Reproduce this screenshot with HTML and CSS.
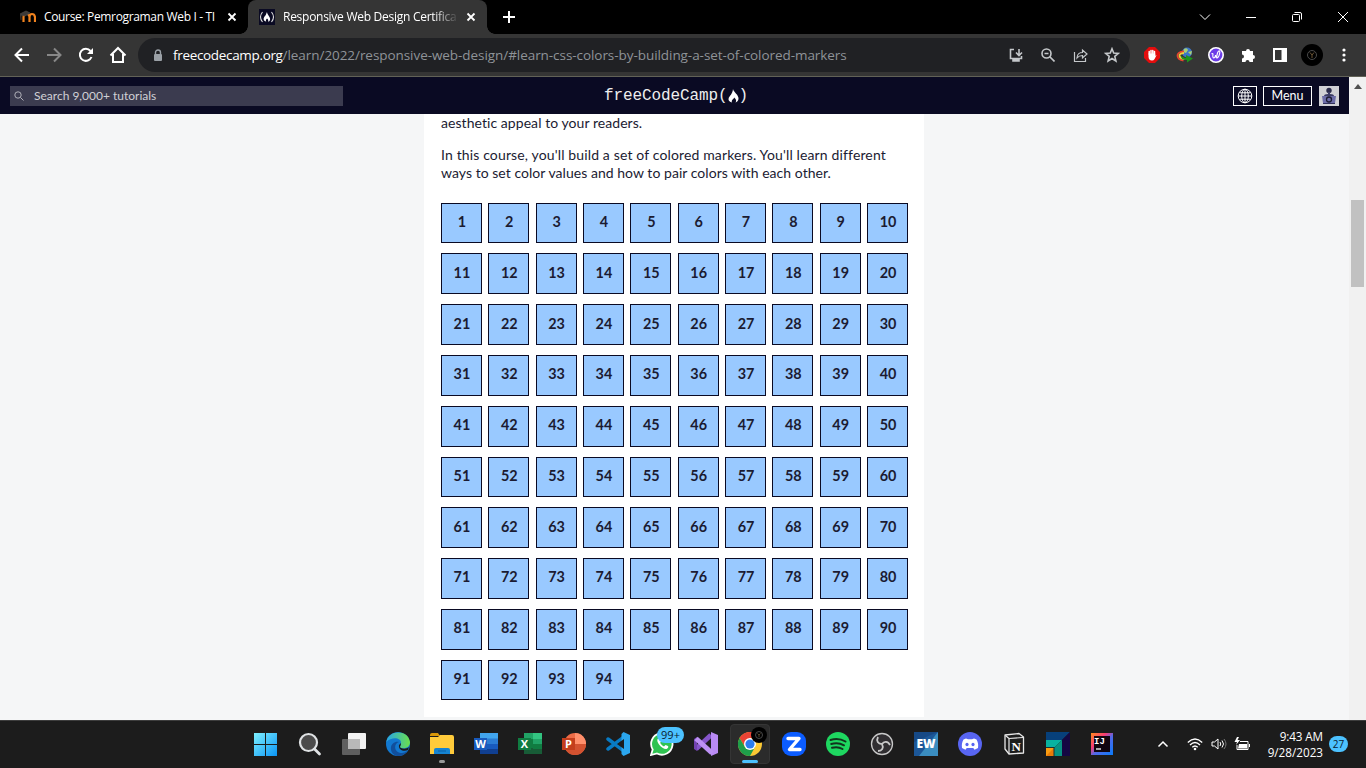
FILE: index.html
```html
<!DOCTYPE html>
<html lang="en">
<head>
<meta charset="utf-8">
<title>Responsive Web Design Certification</title>
<link rel="stylesheet" href="styles.css">
</head>
<body>
<div class="tabs">
  <div class="tab">
    <svg class="fav" width="16" height="16" viewBox="0 0 16 16"><path d="M3.500 13V8q0-3 3-3t3 3v5M9.500 8q0-3 2.500-3t3 3v5" fill="none" stroke="#f0821e" stroke-width="2.200"/><path d="M0 5l6-3 4 2-5 3-4-1v5" fill="#3d3a38" stroke="#4a4643" stroke-width=".8"/></svg>
    <span class="title t1">Course: Pemrograman Web I - TI</span>
    <svg class="x" width="10" height="10" viewBox="0 0 10 10"><path d="M1.500 1.500l7 7M8.500 1.500l-7 7"/></svg>
  </div>
  <div class="tab active">
    <svg class="fav" width="16" height="16" viewBox="0 0 16 16"><path fill="#0a0a23" d="M0 0h16v16H0z"/><path d="M3.500 3Q-.5 8 3.500 13M12.500 3q4 5 0 10" fill="none" stroke="#ddd" stroke-width="1.100"/><path d="M8 3c0 3 4 5 3 8-.5 1-1 1.500-2 1.500.8-2-.3-2-1-3-1 1-1.500 2-.7 3C4 12 4 9 6 7c1-1 1-2 2-4z" fill="#fff"/></svg>
    <span class="title t2">Responsive Web Design Certifica</span>
    <svg class="x" width="10" height="10" viewBox="0 0 10 10"><path d="M1.500 1.500l7 7M8.500 1.500l-7 7"/></svg>
  </div>
  <svg class="plus" width="12" height="12" viewBox="0 0 12 12"><path d="M6 0v12M0 6h12" stroke="#fff" stroke-width="2"/></svg>
  <div class="win">
    <svg viewBox="0 0 12 12"><path d="M1 3.500l5 5 5-5"/></svg>
    <svg viewBox="0 0 12 12"><path d="M1 6.500h10"/></svg>
    <svg viewBox="0 0 12 12"><rect x="1.500" y="3.500" width="7" height="7" rx="1"/><path d="M3.500 1.500h5.500q1.500 0 1.500 1.500v5.500"/></svg>
    <svg viewBox="0 0 12 12"><path d="M1 1l10 10M11 1L1 11"/></svg>
  </div>
</div>
<div class="toolbar">
  <div class="slot"><svg width="16" height="16" viewBox="0 0 16 16" class="ln"><path d="M15 8H2M8 1.500L1.500 8 8 14.500"/></svg></div>
  <div class="slot"><svg width="16" height="16" viewBox="0 0 16 16" class="ln dim"><path d="M1 8h13M8 1.500L14.500 8 8 14.500"/></svg></div>
  <div class="slot"><svg width="16" height="16" viewBox="0 0 16 16" class="ln"><path d="M13.500 10A6 6 0 1 1 12.500 4"/><path d="M15 1v6H9z" fill="#fff" stroke="none"/></svg></div>
  <div class="slot"><svg width="18" height="18" viewBox="0 0 18 18" class="ln"><path d="M1.500 9.500L9 2l7.500 7.500M4 8v8h10V8"/></svg></div>
  <div class="omni">
    <div class="slot lock"><svg width="10" height="13" viewBox="0 0 10 13"><path d="M2.500 5V3.500a2.500 2.500 0 0 1 5 0V5" fill="none" stroke="#9aa0a6" stroke-width="1.400"/><rect x="1" y="5" width="8" height="7" rx="1" fill="#9aa0a6"/></svg></div>
    <div class="url"><b>freecodecamp.org</b>/learn/2022/responsive-web-design/#learn-css-colors-by-building-a-set-of-colored-markers</div>
    <div class="slot"><svg width="14" height="14" viewBox="0 0 14 14" class="gr"><path d="M5 1.500H1.500v9h11V8M10 1v6M7 4.500l3 3 3-3"/><path d="M4 11h6v2H4z" fill="#c4c7ca"/></svg></div>
    <div class="slot"><svg width="14" height="14" viewBox="0 0 14 14" class="gr"><circle cx="5.500" cy="5.500" r="4.500"/><path d="M8.500 8.500l5 5M3.500 5.500h4"/></svg></div>
    <div class="slot"><svg width="15" height="15" viewBox="0 0 15 15" class="gr thin"><path d="M1.500 4v9.500h11V10M4 10c0-4 3-5.500 5.500-5.500V2L14 6l-4.500 4V7.500C7 7.500 5.500 8 4 10z"/></svg></div>
    <div class="slot"><svg width="16" height="16" viewBox="0 0 16 16" class="gr"><path d="M8 1.800l1.700 4.300 4.600.3-3.500 3 1.100 4.600L8 11.500 4.100 14l1.100-4.600-3.500-3 4.600-.3z"/></svg></div>
  </div>
  <div class="slot"><svg width="16" height="16" viewBox="0 0 16 16"><path d="M5 0h6l5 5v6l-5 5H5l-5-5V5z" fill="#e40d0d"/><path d="M5.200 7V4.500M7 7V3.500M8.800 7V3.500M10.500 8V4.500" stroke="#fff" stroke-width="1.500" stroke-linecap="round"/><path d="M4.500 6.500h6.700v2.300l1.400-.8-2 4q-1 1.500-2.600 1.500Q4.500 13.500 4.500 9.500z" fill="#fff"/></svg></div>
  <div class="slot"><svg width="17" height="16" viewBox="0 0 17 16"><circle cx="11" cy="5.500" r="5" fill="#3b75c8"/><path d="M8 2q3-2 4 1l-2 3-3-1zM12 5l4-1-1 4z" fill="#a9cf74"/><path d="M8 4.500Q1 5 1.500 9t6 4.500" fill="none" stroke="#e8452e" stroke-width="1.800"/><path d="M8 6Q3 6.500 3.500 9t5 3" fill="none" stroke="#ead23c" stroke-width="1.800"/><path d="M7 8q-2 1 0 2.500l3 .5V8l7 3.500-6 4V13q-6 0-6-3.500" fill="#1c941c"/></svg></div>
  <div class="slot"><svg width="16" height="16" viewBox="0 0 16 16"><circle cx="8" cy="8" r="7.200" fill="#6c3de8" stroke="#fff" stroke-width="1.600"/><path d="M3.500 7q1-1 1.500 0c-1 5 2 5 2.500 1 0 4 3 4 4-1 1-4-1-4-2-1l-1 4" fill="none" stroke="#fff" stroke-width="1.100"/></svg></div>
  <div class="slot"><svg width="15" height="15" viewBox="0 0 15 15"><path fill="#fff" d="M1 3h4a2 2 0 1 1 4 0h3v4a2 2 0 1 1 0 4v3H8.500a2 2 0 1 0-4 0H1v-3.500a2 2 0 1 0 0-4z"/></svg></div>
  <div class="slot"><svg width="14" height="14" viewBox="0 0 14 14"><path d="M1 1h12v12H1z" fill="none" stroke="#fff" stroke-width="2"/><path fill="#fff" d="M8.500 1H13v12H8.500z"/></svg></div>
  <div class="slot"><svg width="22" height="22" viewBox="0 0 22 22"><circle cx="11" cy="11" r="11" fill="#000"/><circle cx="11" cy="11" r="4.500" fill="none" stroke="#4a4a4a"/><path d="M9 8.500l2 2.500 2-2.500M11 11v3" stroke="#6b5535" fill="none"/></svg></div>
  <div class="slot"><svg width="4" height="14" viewBox="0 0 4 14" fill="#fff"><circle cx="2" cy="2" r="1.600"/><circle cx="2" cy="7" r="1.600"/><circle cx="2" cy="12" r="1.600"/></svg></div>
</div>
<div class="view">
  <div class="site">
    <header class="head">
      <div class="search"><svg width="10" height="10" viewBox="0 0 10 10"><circle cx="4" cy="4" r="3.200"/><path d="M6.500 6.500l3 3"/></svg><span>Search 9,000+ tutorials</span></div>
      <div class="brand"><span>freeCodeCamp(</span><svg width="11" height="14" viewBox="0 0 11 14"><path d="M5 0c.5 3 6 6 5.500 10-.3 2-1.500 3-3 3.500 1.300-2 .5-3-1.300-5C5.500 10.500 3 11 4 13.500 1 13 0 11 .7 9 1.500 7 4.500 5 5 0z" fill="#fff"/></svg><span>)</span></div>
      <div class="nav">
        <div class="btn globe"><svg width="16" height="16" viewBox="0 0 16 16"><circle cx="8" cy="8" r="6.800"/><ellipse cx="8" cy="8" rx="3.300" ry="6.800"/><path d="M8 1.500v13M1.500 8h13M2.500 4.800h11M2.500 11.200h11"/></svg></div>
        <div class="btn menu">Menu</div>
        <svg class="avatar" width="20" height="20" viewBox="0 0 20 20"><path fill="#d0d0d5" d="M0 0h20v20H0z"/><circle cx="10" cy="4.500" r="2.700" fill="#2a2a4a"/><path d="M5 10q0-2 4-2V6h2v2q4 0 4 2z" fill="#3b3b65"/><path d="M3 10h14l-1 7H4z" fill="#6c6ca8"/><circle cx="10" cy="13.500" r="2.500" fill="none" stroke="#1b1b32" stroke-width="1.300"/><path d="M4 17.500h12" stroke="#33335c"/></svg>
      </div>
    </header>
    <main class="page">
      <section class="card">
        <p class="p1">aesthetic appeal to your readers.</p>
        <p class="p2"><span class="l1">In this course, you'll build a set of colored markers. You'll learn different</span><br><span class="l2">ways to set color values and how to pair colors with each other.</span></p>
        <div class="grid">
<a>1</a><a>2</a><a>3</a><a>4</a><a>5</a><a>6</a><a>7</a><a>8</a><a>9</a><a>10</a>
<a>11</a><a>12</a><a>13</a><a>14</a><a>15</a><a>16</a><a>17</a><a>18</a><a>19</a><a>20</a>
<a>21</a><a>22</a><a>23</a><a>24</a><a>25</a><a>26</a><a>27</a><a>28</a><a>29</a><a>30</a>
<a>31</a><a>32</a><a>33</a><a>34</a><a>35</a><a>36</a><a>37</a><a>38</a><a>39</a><a>40</a>
<a>41</a><a>42</a><a>43</a><a>44</a><a>45</a><a>46</a><a>47</a><a>48</a><a>49</a><a>50</a>
<a>51</a><a>52</a><a>53</a><a>54</a><a>55</a><a>56</a><a>57</a><a>58</a><a>59</a><a>60</a>
<a>61</a><a>62</a><a>63</a><a>64</a><a>65</a><a>66</a><a>67</a><a>68</a><a>69</a><a>70</a>
<a>71</a><a>72</a><a>73</a><a>74</a><a>75</a><a>76</a><a>77</a><a>78</a><a>79</a><a>80</a>
<a>81</a><a>82</a><a>83</a><a>84</a><a>85</a><a>86</a><a>87</a><a>88</a><a>89</a><a>90</a>
<a>91</a><a>92</a><a>93</a><a>94</a>
        </div>
      </section>
    </main>
  </div>
  <div class="scroll"><svg width="8" height="5" viewBox="0 0 8 5"><path d="M0 5l4-5 4 5z" fill="#505050"/></svg><div class="thumb"></div></div>
</div>
<footer class="task">
  <div class="apps">
    <div class="app"><svg viewBox="0 0 24 24"><defs><linearGradient id="w" x1="0" y1="0" x2="1" y2="1"><stop offset="0" stop-color="#7df0ff"/><stop offset="1" stop-color="#0a94f5"/></linearGradient></defs><rect width="23" height="23" x="0" y="1" fill="url(#w)"/><path d="M11.500 0v24M0 12.500h24" stroke="#1c1c1c"/></svg></div>
    <div class="app"><svg viewBox="0 0 24 24"><circle cx="10.500" cy="10.500" r="8.500" fill="#4b4b4b" stroke="#dfe2e4" stroke-width="2.200"/><path d="M16.500 17l5 5" stroke="#dfe2e4" stroke-width="2.800" stroke-linecap="round"/></svg></div>
    <div class="app"><svg viewBox="0 0 24 24"><rect x="6" y="1" width="18" height="16" rx="1" fill="#f2f2f2"/><rect x="0" y="7" width="18" height="16" rx="1" fill="#5f5f5f"/><path d="M6 7h12v10H6z" fill="#b9b9b9"/></svg></div>
    <div class="app"><svg viewBox="0 0 24 24"><defs><linearGradient id="e"><stop offset="0" stop-color="#27a5e8"/><stop offset="1" stop-color="#6be04b"/></linearGradient></defs><circle cx="12" cy="12" r="12" fill="#1278d0"/><path d="M.3 10C2-2 22-3 24 10c0 5-4 7-9 6-3-1 0-2 0-5 0-6-10-6-14.700-1z" fill="url(#e)"/><path d="M13 10c-6 2-5 11 3 11 4 0 6-3 6-3-4 8-15 8-17 0-1-6 4-9 8-8z" fill="#114f9c"/><path d="M15 11c0 3-2 4 0 5s6 1 8-1l-1 3c-4 2-10 0-9-5z" fill="#1c1c1c"/></svg></div>
    <div class="app run"><svg viewBox="0 0 24 24"><path d="M0 3q0-2 2-2h6l2 3H0z" fill="#d99708"/><path d="M0 5h8l2-2h12q2 0 2 2v17H0z" fill="#ffcb3b"/><path d="M4 22v-4q0-2 2-2h12q2 0 2 2v4z" fill="#1584d2"/><path d="M8 19h8" stroke="#0a5fa5"/></svg></div>
    <div class="app"><svg viewBox="0 0 24 24"><path fill="#41a5ee" d="M6 1h18v6H6z"/><path fill="#2b7cd3" d="M6 6.500h18V12H6z"/><path fill="#185abd" d="M6 12h18v5.500H6z"/><path fill="#103f91" d="M6 17h18v5H6z"/><path fill="#185abd" d="M0 6h13v12H0z"/><text x="6.500" y="16" class="ol">W</text></svg></div>
    <div class="app"><svg viewBox="0 0 24 24"><path fill="#21a366" d="M6 1h18v11H6z"/><path fill="#33c481" d="M15 1h9v6h-9z"/><path fill="#107c41" d="M6 7h9v10H6z"/><path fill="#185c37" d="M6 16h18v6H6z"/><path fill="#107c41" d="M15 12h9v5h-9zM0 6h13v12H0z"/><text x="6.500" y="16" class="ol">X</text></svg></div>
    <div class="app"><svg viewBox="0 0 24 24"><circle cx="13" cy="12" r="11" fill="#ed6c47"/><path d="M13 1a11 11 0 0 1 11 11H13z" fill="#ff8f6b"/><path d="M2 12h22a11 11 0 0 1-22 0z" fill="#d35230"/><path fill="#c43e1c" d="M0 6h13v12H0z"/><text x="6.500" y="16" class="ol">P</text></svg></div>
    <div class="app"><svg viewBox="0 0 24 24"><path d="M18 5L2 17M18 19L2 7" stroke="#087bc4" stroke-width="3.500" stroke-linecap="round"/><path d="M17.500 0L24 3v18l-6.500 3-2-2V2z" fill="#2ba6ee"/><path d="M18 7v10l-7-5z" fill="#1c1c1c"/></svg></div>
    <div class="app wa"><svg viewBox="0 0 24 24"><path d="M1 23l1.700-5.500A10.700 10.700 0 1 1 7 21.500z" fill="#2fc351" stroke="#fff" stroke-width="1.800"/><path d="M8 6.500c-3 3 4 11 8.500 10.500 2-.7 2-2.500 1.500-3l-2.500-1-1.500 1.500c-2-1-3-2-3.800-3.700L11.300 9l-1.200-2.500z" fill="#fff"/></svg><span class="badge">99+</span></div>
    <div class="app"><svg viewBox="0 0 24 24"><path d="M2 17L17 3" stroke="#8655ca" stroke-width="5"/><path d="M0 7l3-2v14l-3-2z" fill="#7242b0"/><path d="M17 0l7 3v18l-7 3z" fill="#b98af4"/><path d="M2 6.500L18 21" stroke="#bd91f4" stroke-width="5"/></svg></div>
    <div class="app chrome"><svg viewBox="0 0 24 24"><circle cx="12" cy="12" r="12" fill="#fcc934"/><path d="M1.600 6A12 12 0 0 1 22.400 6H12L7 15z" fill="#ea4335"/><path d="M1.600 6A12 12 0 0 0 12 24l5-9H7z" fill="#1e9e4a"/><circle cx="12" cy="12" r="6" fill="#fff"/><circle cx="12" cy="12" r="4.600" fill="#2a7df0"/></svg><svg class="mini" viewBox="0 0 16 16"><circle cx="8" cy="8" r="8" fill="#000"/><circle cx="8" cy="8" r="3.500" fill="none" stroke="#4a4a4a"/><path d="M6.500 6.500L8 8l1.500-1.500M8 8v2" fill="none" stroke="#55462c"/></svg></div>
    <div class="app"><svg viewBox="0 0 24 24"><rect width="24" height="24" rx="9" fill="#0b5cff"/><path d="M6 6.500h11L7.500 17.500H18" fill="none" stroke="#fff" stroke-width="3.400" stroke-linejoin="round" stroke-linecap="round"/></svg></div>
    <div class="app"><svg viewBox="0 0 24 24"><circle cx="12" cy="12" r="12" fill="#1ed760"/><path d="M4.500 8q8-2.500 15 1.500M5.200 12q7-2 12.800 1.300M6 15.800q6-1.500 10.500 1.200" fill="none" stroke="#12331d" stroke-width="2" stroke-linecap="round"/></svg></div>
    <div class="app"><svg viewBox="0 0 24 24"><circle cx="12" cy="12" r="10.500" fill="#302e31" stroke="#c8c8c8" stroke-width="1.300"/><path d="M12 12c-4 0-6-3-4-7M12 12c2-3 6-3 8 1M12 12c2 4 0 7-4 7" fill="none" stroke="#c8c8c8" stroke-width="1.800"/></svg></div>
    <div class="app"><svg viewBox="0 0 24 24"><path fill="#1c5798" d="M0 0h24v24H0z"/><path d="M24 0v24H5z" fill="#4cabd5" opacity=".65"/><path d="M0 0h24L0 10z" fill="#123f7a" opacity=".6"/><text x="12" y="16" class="ew">EW</text></svg></div>
    <div class="app"><svg viewBox="0 0 24 24"><circle cx="12" cy="12" r="12" fill="#5865f2"/><path d="M8 6.500l2 .8h4l2-.8 2.500 1c1.500 2.500 2 5 1.500 8.500l-3.500 1.700-1.200-1.700H8.700l-1.200 1.700L4 16c-.5-3.500 0-6 1.500-8.500z" fill="#fff"/><ellipse cx="9" cy="12.500" rx="1.600" ry="1.800" fill="#5865f2"/><ellipse cx="15" cy="12.500" rx="1.600" ry="1.800" fill="#5865f2"/></svg></div>
    <div class="app"><svg viewBox="0 0 24 24"><path d="M3 3l14-1.500L21.500 5v16L7 22l-4-5z" fill="#1c1c1c" stroke="#e8e8e8" stroke-width="1.300" stroke-linejoin="round"/><path d="M7 6.500L21 5.500M7 6.500V22M3.500 3.500L7 6.500" stroke="#e8e8e8" stroke-width="1.200"/><text x="14.200" y="18.500" class="no">N</text></svg></div>
    <div class="app"><svg viewBox="0 0 24 24"><path fill="#07407a" d="M0 0h24L16 8H0z"/><path fill="#150842" d="M24 0v24h-8V8z"/><path fill="#08b3a0" d="M0 8h16l-7 7H0z"/><path fill="#079382" d="M16 8v16H8v-8z"/><path fill="#fb9d11" d="M0 16h8v8H0z"/><path d="M0 24l8-8v8z" fill="#e87b08"/><path d="M0 15.500h8V24" fill="none" stroke="#1c3033"/></svg></div>
    <div class="app"><svg viewBox="0 0 24 24"><defs><linearGradient id="j" x1="0" y1="0" x2="1" y2="1"><stop offset="0" stop-color="#ff8a1d"/><stop offset=".35" stop-color="#f73a74"/><stop offset=".55" stop-color="#5268e8"/><stop offset="1" stop-color="#087cfa"/></linearGradient></defs><rect x="1" y="1" width="22" height="22" fill="url(#j)"/><path d="M4 4h16v16H4z" fill="#100510"/><text x="9.500" y="12" class="ij">IJ</text><path d="M6 17h5" stroke="#fff" stroke-width="1.300"/></svg></div>
  </div>
  <div class="tray">
    <svg width="12" height="8" viewBox="0 0 12 8"><path d="M1.500 6.500L6 2l4.500 4.500" stroke-width="1.500"/></svg>
    <svg class="wifi" width="16" height="14" viewBox="0 0 16 14"><path d="M.8 5.500q7.200-7 14.400 0M3 8q5-5 10 0M5.300 10.300q2.700-2.700 5.400 0" stroke-width="1.300"/><circle cx="8" cy="12" r="1.300" fill="#fff" stroke="none"/></svg>
    <svg class="snd" width="16" height="14" viewBox="0 0 16 14"><path d="M1 5h2.500L7 2v10L3.500 9H1z"/><path d="M9 5q1.500 2 0 4M11 3.500q3 3.500 0 7"/><path d="M13 2q4 5 0 10" stroke="#777"/></svg>
    <svg class="bat" width="17" height="14" viewBox="0 0 17 14"><path d="M6 4.500h8v8H3V8M15.500 7v3"/><path d="M5 7h8v4.500H4z" fill="#fff" stroke="none"/><path d="M3 0L.5 5H3L2 8l4-5H3.500L5 0z" fill="#fff" stroke="none"/></svg>
    <div class="clock"><span class="tm">9:43 AM</span><span class="dt">9/28/2023</span></div>
    <span class="count">27</span>
  </div>
</footer>
</body>
</html>
```
FILE: styles.css
```css
* { box-sizing: border-box; }
body { margin: 0; width: 1366px; height: 768px; overflow: hidden; display: flex; flex-direction: column; font-family: "Open Sans", sans-serif; background: #000; }
svg { display: block; flex: none; }

.tabs { height: 34px; display: flex; align-items: center; background: #000; color: #fff; }
.tab { width: 248px; height: 34px; display: flex; align-items: center; padding-left: 20px; }
.tab.active { position: relative; width: 239px; padding-left: 11px; background: #353535; border-radius: 8px 8px 0 0; }
.tab.active::before, .tab.active::after { content: ""; position: absolute; bottom: 0; width: 8px; height: 8px; }
.tab.active::before { left: -8px; background: radial-gradient(circle at 0 0, transparent 7.5px, #353535 8px); }
.tab.active::after { right: -8px; background: radial-gradient(circle at 100% 0, transparent 7.5px, #353535 8px); }
.title { margin-left: 8px; width: 175px; font-size: 12px; line-height: 16px; letter-spacing: -.34px; white-space: nowrap; }
.t2 { width: 178px; letter-spacing: -.27px; -webkit-mask-image: linear-gradient(90deg, #000 150px, transparent 176px); mask-image: linear-gradient(90deg, #000 150px, transparent 176px); }
.x { margin-left: 8px; fill: none; stroke: #fff; stroke-width: 1.8; }
.active .x { margin-left: 5px; }
.plus { margin-left: 16px; }
.win { margin-left: auto; display: flex; align-items: center; height: 28px; }
.win svg { width: 12px; height: 12px; margin: 0 17px; fill: none; stroke: #fff; stroke-width: 1; }

.toolbar { height: 43px; display: flex; align-items: center; background: #353535; padding: 0 6px; border-bottom: 1px solid #626257; }
.slot { width: 32px; flex: none; display: flex; justify-content: center; align-items: center; }
.ln { fill: none; stroke: #fff; stroke-width: 2; }
.dim { stroke: #888; }
.gr { fill: none; stroke: #c4c7ca; stroke-width: 1.6; }
.thin { stroke-width: 1.2; }
.omni { width: 992px; height: 34px; margin: 0 6px 0 4px; padding-left: 4px; border-radius: 17px; background: #202124; display: flex; align-items: center; }
.lock { width: 31px; }
.url { width: 827px; font-size: 13.5px; letter-spacing: -.06px; color: #8f9398; white-space: nowrap; }
.url b { font-weight: 400; color: #fff; letter-spacing: -.33px; }

.view { height: 643px; display: flex; }
.site { width: 1349px; display: flex; flex-direction: column; }
.head { height: 37px; flex: none; background: #0a0a23; padding: 0 10px; display: flex; align-items: center; color: #fff; font-family: Lato, sans-serif; }
.search { width: 333px; height: 20px; background: #3b3b4f; color: #d0d0d5; display: flex; align-items: center; padding-left: 4px; font-size: 12px; }
.search svg { fill: none; stroke: #b0b0b8; margin-right: 10px; }
.brand { margin-left: 261px; display: flex; align-items: center; font: 16px/20px "Liberation Mono", monospace; letter-spacing: -.1px; color: #eee; }
.nav { margin-left: auto; display: flex; align-items: center; }
.btn { height: 20px; border: 1px solid #fff; display: flex; align-items: center; justify-content: center; }
.globe { width: 24px; }
.globe svg { fill: none; stroke: #fff; }
.menu { width: 49px; margin: 0 7px 0 6px; font-size: 12.5px; }

.page { flex: 1; background: #f5f6f7; border-bottom: 3px solid #f5f6f7; display: flex; }
.card { margin-left: 424px; width: 500px; background: #fff; padding: 0 16px 0 17px; color: #1b1b32; font: 14px/18px Lato, sans-serif; overflow: hidden; }
.p1 { margin: 0 0 14px; letter-spacing: .06px; }
.p2 { margin: 0 0 20.7px; white-space: nowrap; }
.l1 { letter-spacing: .14px; }
.l2 { letter-spacing: .04px; }
.grid { display: grid; grid-template-columns: repeat(10, 1fr); grid-auto-rows: 40.78px; gap: 10px 6.5px; }
.grid a { display: flex; align-items: center; justify-content: center; background: #99c9ff; border: 1px solid #0a0a23; font-weight: 700; font-size: 14.4px; padding: 0 0 2px 1px; }
.scroll { width: 17px; background: #f1f1f1; display: flex; flex-direction: column; align-items: center; padding-top: 7px; }
.thumb { width: 13px; height: 87px; margin-top: 111px; background: #c1c1c1; }

.task { height: 48px; background: #1c1c1c; border-top: 1px solid #3d3d3d; display: flex; }
.apps { padding-left: 244px; display: flex; }
.app { position: relative; width: 44px; height: 46px; display: flex; align-items: center; justify-content: center; }
.app > svg { width: 24px; height: 24px; }
.run::after { content: ""; position: absolute; left: 19px; bottom: 4px; width: 6px; height: 3px; border-radius: 2px; background: #999; }
.chrome { width: 40px; height: 40px; margin: 3px 2px; background: #2b2b2b; border: 1px solid #353535; border-radius: 4px; }
.chrome::after { content: ""; position: absolute; left: 11px; bottom: 0; width: 16px; height: 3px; border-radius: 2px; background: #4cc2ff; }
.app > .mini { position: absolute; left: 20px; top: 2px; width: 16px; height: 16px; }
.badge { position: absolute; left: 17px; top: 6px; width: 27px; height: 16px; border-radius: 8px; background: #4cc2ff; color: #0a2030; font-size: 11px; line-height: 16px; text-align: center; }
.ol { font: 700 11px "Open Sans", sans-serif; fill: #fff; text-anchor: middle; }
.ew { font: 800 12px "Open Sans", sans-serif; fill: #fff; text-anchor: middle; }
.no { font: 700 13px "Liberation Serif", serif; fill: #fff; text-anchor: middle; }
.ij { font: 700 9px "Liberation Mono", monospace; fill: #fff; text-anchor: middle; }
.tray { flex: 1; height: 46px; display: flex; align-items: center; padding-left: 33px; color: #fff; }
.tray svg { fill: none; stroke: #fff; stroke-width: 1; }
.wifi { margin-left: 18px; }
.snd { margin-left: 8px; }
.bat { margin-left: 7px; }
.clock { width: 72px; display: flex; flex-direction: column; align-items: flex-end; font-size: 11.7px; line-height: 16px; }
.tm { letter-spacing: -.1px; }
.count { margin-left: 6px; width: 19px; height: 16px; border-radius: 8px; background: #4cc2ff; color: #0a2030; font-size: 10px; line-height: 16px; text-align: center; }
```
